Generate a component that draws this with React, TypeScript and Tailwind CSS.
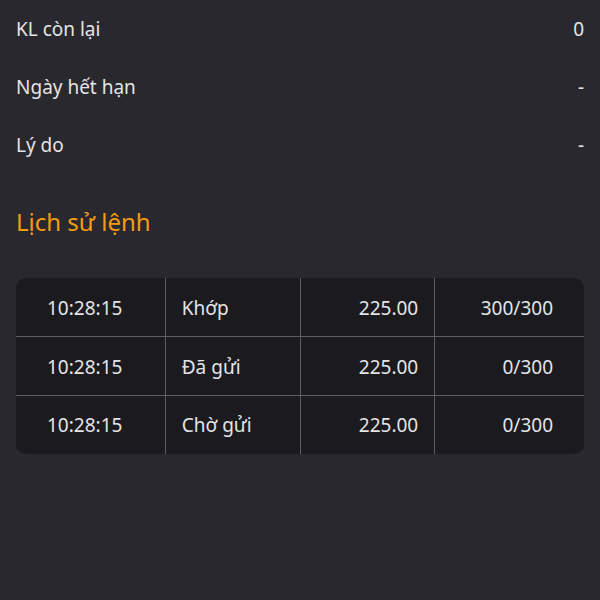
const info = [
  { label: 'KL còn lại', value: '0' },
  { label: 'Ngày hết hạn', value: '-' },
  { label: 'Lý do', value: '-' },
];

const orders = [
  { time: '10:28:15', status: 'Khớp', price: '225.00', qty: '300/300' },
  { time: '10:28:15', status: 'Đã gửi', price: '225.00', qty: '0/300' },
  { time: '10:28:15', status: 'Chờ gửi', price: '225.00', qty: '0/300' },
];

export default function App() {
  return (
    <div className="h-[600px] w-[600px] overflow-hidden bg-[#29282e] px-4 font-['Noto_Sans',sans-serif] text-[#e4e4e6]">
      <div className="flex flex-col">
        {info.map((row) => (
          <div key={row.label} className="flex h-[58px] items-center justify-between text-[19px]">
            <span>{row.label}</span>
            <span>{row.value}</span>
          </div>
        ))}
      </div>

      <h2 className="mt-[30px] text-[24px] leading-[36px] text-[#f39c12]">Lịch sử lệnh</h2>

      <div className="mt-[38px] overflow-hidden rounded-[10px] bg-[#1b1a1f]">
        <table className="w-full table-fixed border-collapse text-[19px]">
          <colgroup>
            <col className="w-[149px]" />
            <col className="w-[135px]" />
            <col className="w-[134px]" />
            <col className="w-[149px]" />
          </colgroup>
          <tbody>
            {orders.map((o, i) => (
              <tr key={i} className="h-[58.5px] border-b border-[#5e5d63] last:border-b-0">
                <td className="border-r border-[#5e5d63] pt-[2px] pl-[31px]">{o.time}</td>
                <td className="border-r border-[#5e5d63] pt-[2px] pl-4">{o.status}</td>
                <td className="border-r border-[#5e5d63] pt-[2px] pr-4 text-right">{o.price}</td>
                <td className="pt-[2px] pr-[31px] text-right">{o.qty}</td>
              </tr>
            ))}
          </tbody>
        </table>
      </div>
    </div>
  );
}
